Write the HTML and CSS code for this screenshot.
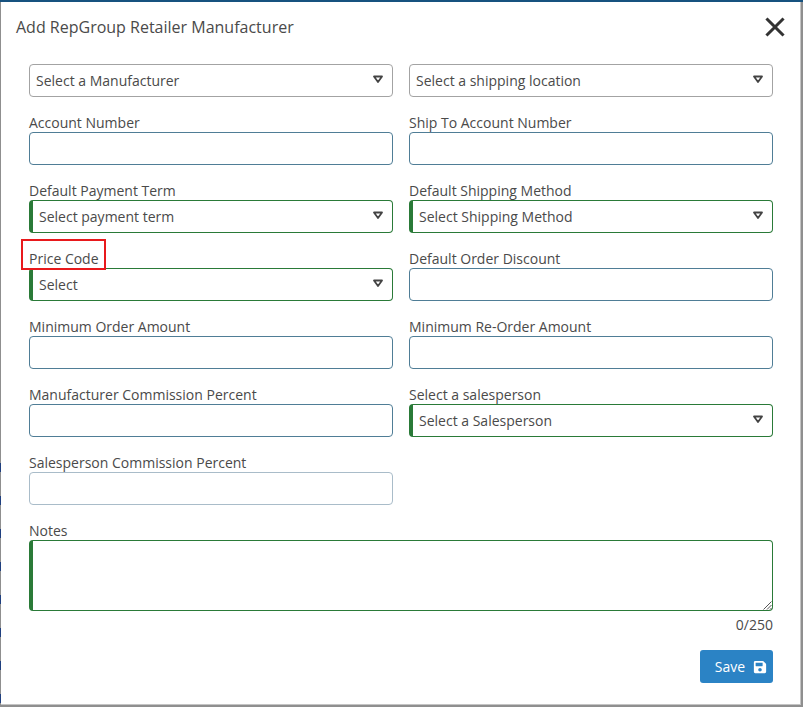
FILE: index.html
```html
<!DOCTYPE html>
<html lang="en">
<head>
<meta charset="utf-8">
<title>Add RepGroup Retailer Manufacturer</title>
<link rel="stylesheet" href="styles.css">
</head>
<body>
<svg width="0" height="0" class="defs"><defs>
<symbol id="caret" viewBox="0 0 12 9"><path d="M2 1.500h8L6 7z" fill="none" stroke="#444" stroke-width="1.800" stroke-linejoin="round"/></symbol>
</defs></svg>
<div class="backdrop-rows"></div>
<main class="modal">
  <header class="modal-head">
    <h1 class="modal-title">Add RepGroup Retailer Manufacturer</h1>
    <button class="close" aria-label="Close"><svg width="20" height="20" viewBox="0 0 20 20"><path d="M2.500 2.500l15 15M17.500 2.500l-15 15" stroke="#333" stroke-width="3" stroke-linecap="square" fill="none"/></svg></button>
  </header>
  <form class="form">
    <div class="field"><div class="control select">Select a Manufacturer<svg class="caret"><use href="#caret"/></svg></div></div>
    <div class="field"><div class="control select">Select a shipping location<svg class="caret"><use href="#caret"/></svg></div></div>

    <div class="field"><label class="label">Account Number</label><div class="control input"></div></div>
    <div class="field"><label class="label">Ship To Account Number</label><div class="control input"></div></div>

    <div class="field"><label class="label">Default Payment Term</label><div class="control select required">Select payment term<svg class="caret"><use href="#caret"/></svg></div></div>
    <div class="field"><label class="label">Default Shipping Method</label><div class="control select required">Select Shipping Method<svg class="caret"><use href="#caret"/></svg></div></div>

    <div class="field"><label class="label marked">Price Code</label><div class="control select required">Select<svg class="caret"><use href="#caret"/></svg></div></div>
    <div class="field"><label class="label">Default Order Discount</label><div class="control input"></div></div>

    <div class="field"><label class="label">Minimum Order Amount</label><div class="control input"></div></div>
    <div class="field"><label class="label">Minimum Re-Order Amount</label><div class="control input"></div></div>

    <div class="field"><label class="label">Manufacturer Commission Percent</label><div class="control input"></div></div>
    <div class="field"><label class="label">Select a salesperson</label><div class="control select required">Select a Salesperson<svg class="caret"><use href="#caret"/></svg></div></div>

    <div class="field"><label class="label">Salesperson Commission Percent</label><div class="control input pale"></div></div>
    <div class="field"></div>

    <div class="field wide">
      <label class="label">Notes</label>
      <div class="control notes required"><svg class="grip" width="10" height="10" viewBox="0 0 10 10"><path d="M9.500 1.500l-8 8M9.500 5l-4.500 4.500M9.500 8l-1.500 1.500" stroke="#555" stroke-width="1" fill="none"/></svg></div>
      <div class="count">0/250</div>
    </div>
  </form>
  <footer class="actions">
    <button class="save" type="button">Save<svg width="14" height="14" viewBox="0 0 448 512"><path fill="#fff" d="M433.900 129.900l-83.900-83.900A48 48 0 0 0 316.100 32H48C21.500 32 0 53.500 0 80v352c0 26.500 21.500 48 48 48h352c26.500 0 48-21.500 48-48V163.900a48 48 0 0 0-14.100-34zM224 416c-35.300 0-64-28.700-64-64s28.700-64 64-64 64 28.700 64 64-28.700 64-64 64zm96-304.500V212c0 6.600-5.400 12-12 12H76c-6.600 0-12-5.400-12-12V108c0-6.600 5.400-12 12-12h228.500c3.200 0 6.200 1.300 8.500 3.500l3.500 3.500c2.200 2.200 3.500 5.300 3.500 8.500z"/></svg></button>
  </footer>
</main>
</body>
</html>
```
FILE: styles.css
```css
* { box-sizing: border-box; }
html, body { margin: 0; height: 100%; }
body {
  background: #8f8f8f;
  border-top: 2px solid #17527f;
  padding: 0 2px 2px 1px;
  font-family: "Open Sans", sans-serif;
  font-size: 14px;
  line-height: 20px;
  color: #4a4a4a;
  overflow: hidden;
}
.defs { position: absolute; }
.backdrop-rows {
  position: absolute;
  left: 0;
  top: 463px;
  width: 1px;
  height: 242px;
  background: repeating-linear-gradient(#1f3f7f 0 9px, #8f8f8f 9px 33px);
}
.modal {
  position: relative;
  background: #fff;
  height: 703px;
  display: flex;
  flex-direction: column;
  border-right: 1px solid #c4c4c4;
  border-bottom: 1px solid #c4c4c4;
}
.modal-head {
  display: flex;
  justify-content: space-between;
  align-items: center;
  height: 51px;
  padding: 0 15px 1px 15px;
}
.modal-title {
  margin: 0;
  font-size: 16px;
  font-weight: 400;
  line-height: 24px;
  color: #4a4a4a;
}
.close {
  border: 0;
  padding: 0;
  background: none;
  width: 20px;
  height: 20px;
  display: block;
}
.form {
  display: grid;
  grid-template-columns: 364px 364px;
  column-gap: 16px;
  padding: 11px 28px 0;
}
.field { margin-bottom: 16px; min-width: 0; }
.wide { grid-column: 1 / -1; margin-bottom: 0; }
.label { display: block; height: 19px; position: relative; }
.marked::after {
  content: "";
  box-sizing: border-box;
  position: absolute;
  left: -8px;
  top: -10px;
  width: 85px;
  height: 31px;
  border: 2px solid #e8191c;
}
.control {
  height: 33px;
  background: #fff;
  border: 1px solid #4f7d96;
  border-radius: 4px;
}
.select {
  display: flex;
  align-items: center;
  justify-content: space-between;
  padding: 0 8px 0 6px;
  border-color: #a3a3a3;
}
.caret { width: 12px; height: 9px; flex: none; margin-top: -2px; }
.pale { border-color: #a9bcc9; }
.required { border-color: #2a7a38; border-left-width: 4px; padding-left: 6px; }
.notes { height: 71px; position: relative; }
.grip { position: absolute; right: 0; bottom: 0; }
.count { text-align: right; margin-top: 4px; height: 20px; }
.actions { display: flex; justify-content: flex-end; padding: 15px 27px 0 0; }
.save {
  display: flex;
  align-items: center;
  justify-content: center;
  gap: 8px;
  width: 73px;
  height: 33px;
  padding: 0 0 0 9px;
  background: #2b83c5;
  border: 0;
  border-radius: 3px;
  color: #fff;
  font: 500 14px/20px "Open Sans", sans-serif;
}
```
